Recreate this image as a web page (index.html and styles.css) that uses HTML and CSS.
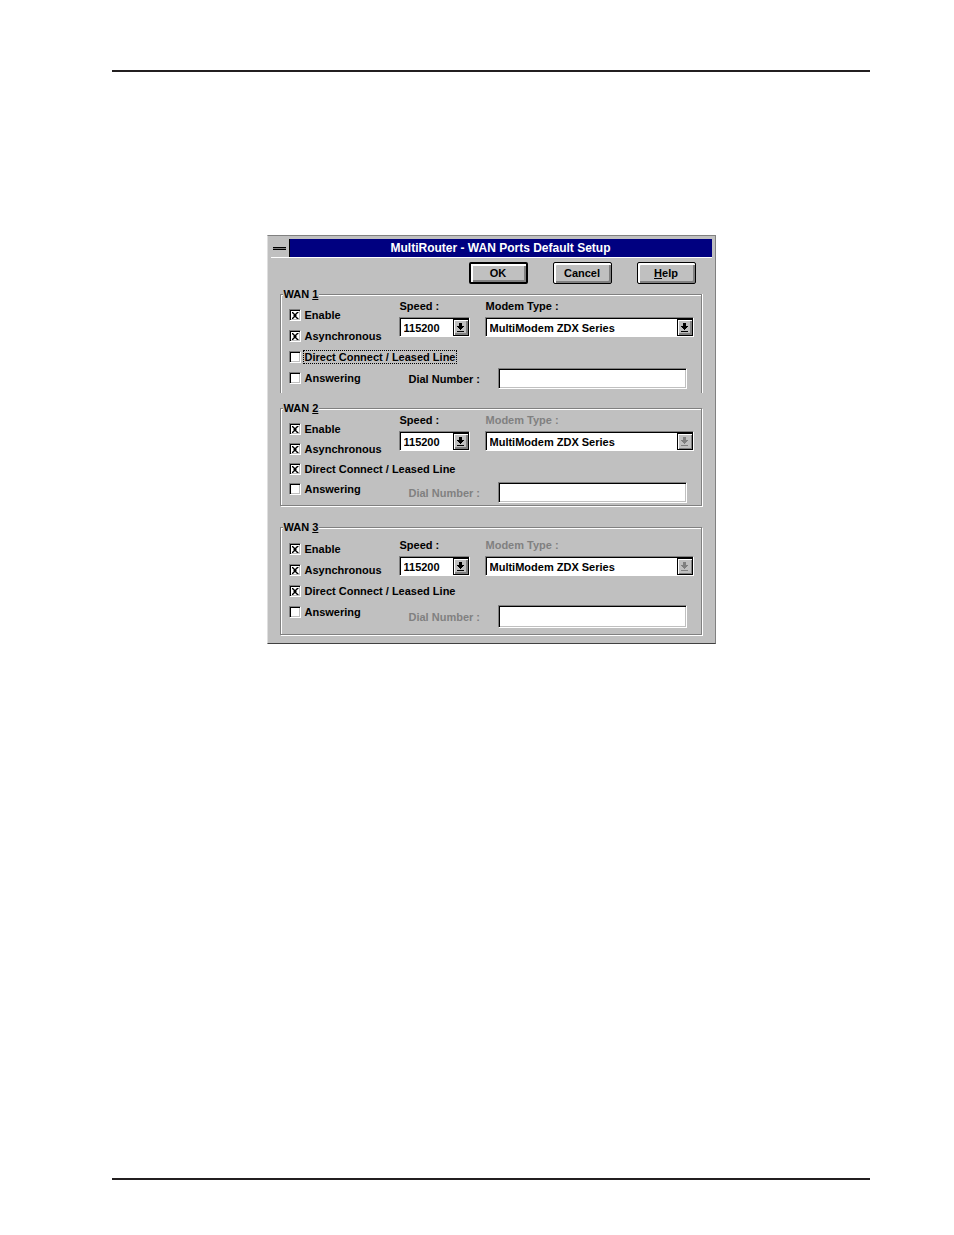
FILE: index.html
```
<!DOCTYPE html>
<html lang="en">
<head>
<meta charset="UTF-8">
<meta name="viewport" content="width=device-width, initial-scale=1.0">
<title>MultiRouter - WAN Ports Default Setup</title>
<link rel="stylesheet" href="styles.css">
</head>
<body>

<main class="page">
  <form class="dialog">
    <div class="titlebar">
      <button type="button" class="sysmenu" aria-label="System menu"><span class="sysmenu-bar"></span></button>
      <h1 class="title">MultiRouter - WAN Ports Default Setup</h1>
    </div>

    <div class="buttons">
      <button type="button" class="btn btn-default">OK</button>
      <button type="button" class="btn">Cancel</button>
      <button type="button" class="btn"><u>H</u>elp</button>
    </div>

    <!-- WAN 1 -->
    <fieldset class="group group-1">
      <legend>WAN <u>1</u></legend>
      <div class="checks">
        <label class="check"><input type="checkbox" checked><span>Enable</span></label>
        <label class="check"><input type="checkbox" checked><span>Asynchronous</span></label>
        <label class="check focused"><input type="checkbox"><span>Direct Connect / Leased Line</span></label>
        <label class="check"><input type="checkbox"><span>Answering</span></label>
      </div>
      <div class="settings">
        <div class="line">
          <div class="field speed">
            <label for="speed1">Speed :</label>
            <div class="combo">
              <select id="speed1"><option>115200</option></select>
              <span class="drop"><svg width="9" height="10" viewBox="0 0 9 10"><path d="M3 0h3v3h2v1h-1v1h-1v1h-1v1h-1v-1h-1v-1h-1v-1h-1v-1h2zM1 8h7v1h-7z"/></svg></span>
            </div>
          </div>
          <div class="field modem">
            <label for="modem1">Modem Type :</label>
            <div class="combo">
              <select id="modem1"><option>MultiModem ZDX Series</option></select>
              <span class="drop"><svg width="9" height="10" viewBox="0 0 9 10"><path d="M3 0h3v3h2v1h-1v1h-1v1h-1v1h-1v-1h-1v-1h-1v-1h-1v-1h2zM1 8h7v1h-7z"/></svg></span>
            </div>
          </div>
        </div>
        <div class="dial">
          <label for="dial1">Dial Number :</label>
          <input type="text" id="dial1">
        </div>
      </div>
    </fieldset>

    <!-- WAN 2 -->
    <fieldset class="group group-2">
      <legend>WAN <u>2</u></legend>
      <div class="checks">
        <label class="check"><input type="checkbox" checked><span>Enable</span></label>
        <label class="check"><input type="checkbox" checked><span>Asynchronous</span></label>
        <label class="check"><input type="checkbox" checked><span>Direct Connect / Leased Line</span></label>
        <label class="check"><input type="checkbox"><span>Answering</span></label>
      </div>
      <div class="settings">
        <div class="line">
          <div class="field speed">
            <label for="speed2">Speed :</label>
            <div class="combo">
              <select id="speed2"><option>115200</option></select>
              <span class="drop"><svg width="9" height="10" viewBox="0 0 9 10"><path d="M3 0h3v3h2v1h-1v1h-1v1h-1v1h-1v-1h-1v-1h-1v-1h-1v-1h2zM1 8h7v1h-7z"/></svg></span>
            </div>
          </div>
          <div class="field modem off">
            <label for="modem2">Modem Type :</label>
            <div class="combo">
              <select id="modem2" disabled><option>MultiModem ZDX Series</option></select>
              <span class="drop"><svg width="9" height="10" viewBox="0 0 9 10"><path d="M3 0h3v3h2v1h-1v1h-1v1h-1v1h-1v-1h-1v-1h-1v-1h-1v-1h2zM1 8h7v1h-7z"/></svg></span>
            </div>
          </div>
        </div>
        <div class="dial off">
          <label for="dial2">Dial Number :</label>
          <input type="text" id="dial2" disabled>
        </div>
      </div>
    </fieldset>

    <!-- WAN 3 -->
    <fieldset class="group group-3">
      <legend>WAN <u>3</u></legend>
      <div class="checks">
        <label class="check"><input type="checkbox" checked><span>Enable</span></label>
        <label class="check"><input type="checkbox" checked><span>Asynchronous</span></label>
        <label class="check"><input type="checkbox" checked><span>Direct Connect / Leased Line</span></label>
        <label class="check"><input type="checkbox"><span>Answering</span></label>
      </div>
      <div class="settings">
        <div class="line">
          <div class="field speed">
            <label for="speed3">Speed :</label>
            <div class="combo">
              <select id="speed3"><option>115200</option></select>
              <span class="drop"><svg width="9" height="10" viewBox="0 0 9 10"><path d="M3 0h3v3h2v1h-1v1h-1v1h-1v1h-1v-1h-1v-1h-1v-1h-1v-1h2zM1 8h7v1h-7z"/></svg></span>
            </div>
          </div>
          <div class="field modem off">
            <label for="modem3">Modem Type :</label>
            <div class="combo">
              <select id="modem3" disabled><option>MultiModem ZDX Series</option></select>
              <span class="drop"><svg width="9" height="10" viewBox="0 0 9 10"><path d="M3 0h3v3h2v1h-1v1h-1v1h-1v1h-1v-1h-1v-1h-1v-1h-1v-1h2zM1 8h7v1h-7z"/></svg></span>
            </div>
          </div>
        </div>
        <div class="dial off">
          <label for="dial3">Dial Number :</label>
          <input type="text" id="dial3" disabled>
        </div>
      </div>
    </fieldset>
  </form>
</main>

</body>
</html>
```
FILE: styles.css
```
* {
    box-sizing: border-box;
}

body {
    margin: 0;
    padding: 70px 84px 55px 112px;
    min-height: 100vh;
    display: flex;
    background-color: #fff;
    color: #000;
    font-family: "Liberation Sans", Arial, sans-serif;
    font-size: 11px;
    font-weight: bold;
    line-height: 12px;
}

button,
input,
select {
    font: inherit;
    color: inherit;
    margin: 0;
    border-radius: 0;
}

.page {
    flex: 1;
    padding-top: 163px;
    border-top: 2px solid #231f20;
    border-bottom: 2px solid #231f20;
}

.dialog {
    max-width: 449px;
    margin: 0 auto;
    padding: 3px 3px 8px;
    background-color: #c0c0c0;
    border: 1px solid #808080;
    border-left-color: #dfdfdf;
    border-bottom-color: #404040;
}

.titlebar {
    display: flex;
    height: 19px;
    background-color: #000080;
    border-bottom: 1px solid #fff;
}

.sysmenu {
    width: 19px;
    padding: 0;
    display: flex;
    align-items: center;
    justify-content: center;
    background-color: #c0c0c0;
    border: 0;
    border-right: 1px solid #000;
}

.sysmenu-bar {
    width: 13px;
    height: 3px;
    background-color: #808080;
    border-top: 1px solid #000;
    border-bottom: 1px solid #000;
}

.title {
    flex: 1;
    margin: 0;
    color: #fff;
    font-size: 12px;
    line-height: 18px;
    text-align: center;
}

.buttons {
    display: flex;
    justify-content: flex-end;
    gap: 25px;
    padding: 4px 16px 0 0;
}

.btn {
    width: 59px;
    height: 22px;
    padding: 0;
    background-color: #c0c0c0;
    border: 1px solid #000;
    border-radius: 2px;
    box-shadow: inset 2px 2px 0 #fff, inset -2px -2px 0 #808080;
}

.btn-default {
    border-width: 2px;
}

.group {
    display: flex;
    min-width: 0;
    margin: 0 10px 0 9px;
    padding: 0 7px 0 8px;
    border: 1px solid #808080;
    box-shadow: 1px 1px 0 #fff, inset 1px 1px 0 #fff;
}

.group legend {
    margin-left: -6px;
    padding: 0 1px;
    background-color: #c0c0c0;
}

.checks {
    width: 110px;
    display: flex;
    flex-direction: column;
    gap: 8px;
    padding-top: 9px;
    white-space: nowrap;
}

.check {
    display: flex;
    align-items: center;
    gap: 3px;
}

.check span {
    padding: 0 1px;
}

.focused span {
    outline: 1px dotted #000;
}

.check input {
    appearance: none;
    flex: none;
    width: 12px;
    height: 12px;
    background-color: #fff;
    border: 1px solid #808080;
    border-right-color: #fff;
    border-bottom-color: #fff;
    box-shadow: inset 1px 1px 0 #000, inset -1px -1px 0 #c0c0c0;
}

/* the cross, drawn on a 7x7 grid */
.check input:checked::before {
    content: "";
    display: block;
    width: 7px;
    height: 7px;
    margin: 2px;
    background-color: #000;
    clip-path: polygon(0 0, 2px 0, 2px 1px, 3px 1px, 3px 2px, 4px 2px, 4px 1px, 5px 1px, 5px 0, 7px 0, 7px 1px, 6px 1px, 6px 2px, 5px 2px, 5px 5px, 6px 5px, 6px 6px, 7px 6px, 7px 7px, 5px 7px, 5px 6px, 4px 6px, 4px 5px, 3px 5px, 3px 6px, 2px 6px, 2px 7px, 0 7px, 0 6px, 1px 6px, 1px 5px, 2px 5px, 2px 2px, 1px 2px, 1px 1px, 0 1px);
}

.settings {
    flex: 1;
    min-width: 0;
}

.line {
    display: flex;
    gap: 15px;
}

.field label {
    display: block;
    padding-left: 1px;
}

.speed {
    width: 71px;
}

.modem {
    flex: 1;
}

.combo {
    display: flex;
    height: 20px;
    margin-top: 5px;
    border: 1px solid #808080;
    border-right-color: #fff;
    border-bottom-color: #fff;
    background-color: #000;
    padding: 1px 0 0 1px;
}

.combo select {
    appearance: none;
    flex: 1;
    min-width: 0;
    padding: 0 0 0 3px;
    background-color: #fff;
    border: 0;
    opacity: 1;
}

.drop {
    width: 16px;
    display: flex;
    align-items: center;
    justify-content: center;
    background-color: #c0c0c0;
    border: 1px solid #000;
    box-shadow: inset 1px 1px 0 #fff, inset -2px -2px 0 #808080;
}

.dial {
    display: flex;
    align-items: center;
    justify-content: flex-end;
    margin-top: 31px;
    padding-right: 7px;
}

.dial label {
    width: 89px;
}

.dial input {
    width: 189px;
    height: 21px;
    padding: 0 3px;
    background-color: #fff;
    border: 1px solid #808080;
    border-right-color: #fff;
    border-bottom-color: #fff;
    box-shadow: inset 1px 1px 0 #000, inset -1px -1px 0 #c0c0c0;
}

.off label {
    color: #808080;
}

.off .drop {
    box-shadow: inset 1px 1px 0 #fff, inset -1px -1px 0 #808080;
}

.off .drop svg {
    fill: #808080;
}

.group-1 {
    height: 105px;
    margin-top: 4px;
    border-bottom: 0;
    box-shadow: 1px 0 0 #fff, inset 1px 1px 0 #fff;
}

.group-1 .checks {
    gap: 9px;
}

.group-2 {
    height: 104px;
    margin-top: 9px;
}

.group-3 {
    height: 114px;
    margin-top: 15px;
}

.group-3 .checks {
    gap: 9px;
    padding-top: 10px;
}

.group-3 .settings {
    padding-top: 6px;
}

.group-3 .dial {
    margin-top: 29px;
}

.group-3 .dial input {
    height: 23px;
}
```
